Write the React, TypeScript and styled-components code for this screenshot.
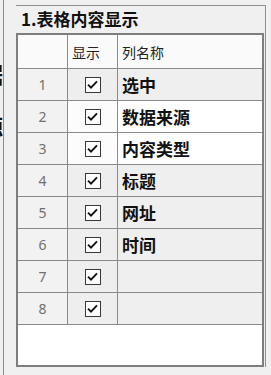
import styled, { createGlobalStyle } from "styled-components";

const GlobalStyle = createGlobalStyle`
  html, body {
    margin: 0;
    padding: 0;
    background: #f0f0f0;
  }
  body {
    font-family: "Noto Sans CJK SC", "Noto Sans", sans-serif;
  }
`;

const rows = [
  { name: "选中", light: false },
  { name: "数据来源", light: true },
  { name: "内容类型", light: true },
  { name: "标题", light: false },
  { name: "网址", light: false },
  { name: "时间", light: false },
  { name: "", light: false },
  { name: "", light: false },
];

const Check = () => (
  <CheckBox>
    <svg width="13" height="13" viewBox="0 0 13 13">
      <path d="M2 6.6 L5 9.6 L11 3.4" fill="none" stroke="#111" strokeWidth="1.9" />
    </svg>
  </CheckBox>
);

export default function App() {
  return (
    <>
      <GlobalStyle />
      <Page>
        <LeftEdge>
          <Clipped>
            <Fragment $top={60}>据</Fragment>
            <Fragment $top={112}>源</Fragment>
          </Clipped>
          <GreenLine />
        </LeftEdge>
        <GroupBox>
          <Title>1.表格内容显示</Title>
          <Table>
            <Grid>
              <HeadCell />
              <HeadCell>显示</HeadCell>
              <HeadCell>列名称</HeadCell>
              {rows.map((r, i) => (
                <Row key={i}>
                  <NumCell>{i + 1}</NumCell>
                  <CheckCell $light={r.light}>
                    <Check />
                  </CheckCell>
                  <NameCell $light={r.light}>{r.name}</NameCell>
                </Row>
              ))}
            </Grid>
            <Filler />
          </Table>
        </GroupBox>
      </Page>
    </>
  );
}

const Page = styled.div`
  display: flex;
  height: 375px;
  width: 271px;
  overflow: hidden;
`;

const LeftEdge = styled.div`
  width: 16px;
  display: flex;
  flex-shrink: 0;
`;

const Clipped = styled.div`
  width: 3px;
  height: 100%;
  overflow: hidden;
  position: relative;
`;

const Fragment = styled.div<{ $top: number }>`
  position: absolute;
  top: ${(p) => p.$top}px;
  right: 0;
  font-size: 22px;
  font-weight: 700;
  color: #111;
  line-height: 26px;
`;

const GreenLine = styled.div`
  width: 1px;
  height: 100%;
  background: #47b083;
`;

const GroupBox = styled.div`
  margin-top: 5px;
  width: 250px;
  height: 362px;
  box-sizing: border-box;
  border: 1px solid #8e8e8e;
  border-left: 0;
  border-bottom: 0;
  display: flex;
  flex-direction: column;
  flex-shrink: 0;
`;

const Title = styled.div`
  height: 27px;
  padding-left: 5px;
  font-size: 17px;
  font-weight: 700;
  line-height: 25px;
  color: #111;
`;

const Table = styled.div`
  flex: 1;
  margin-right: 1px;
  border: 2px solid #7d7d7d;
  background: #ffffff;
  display: flex;
  flex-direction: column;
`;

const Grid = styled.div`
  display: grid;
  grid-template-columns: 49px 49px 1fr;
  grid-auto-rows: 31px;
  grid-template-rows: 33px;
  gap: 1px;
  background: #8a8a8a;
  border-bottom: 1px solid #8a8a8a;
`;

const HeadCell = styled.div`
  background: #fafafa;
  display: flex;
  align-items: center;
  padding-left: 4px;
  font-size: 14px;
  color: #222;
`;

const Row = styled.div`
  display: contents;
`;

const NumCell = styled.div`
  background: #f2f2f2;
  display: flex;
  align-items: center;
  justify-content: center;
  font-family: "Noto Sans", "Liberation Sans", sans-serif;
  font-size: 14px;
  color: #707070;
`;

const CheckCell = styled.div<{ $light: boolean }>`
  background: ${(p) => (p.$light ? "#fcfcfc" : "#eeeeee")};
  display: flex;
  align-items: center;
  justify-content: center;
`;

const NameCell = styled.div<{ $light: boolean }>`
  background: ${(p) => (p.$light ? "#ffffff" : "#efefef")};
  display: flex;
  align-items: center;
  padding-left: 4px;
  font-size: 17px;
  font-weight: 700;
  color: #111;
`;

const CheckBox = styled.div`
  width: 16px;
  height: 16px;
  box-sizing: border-box;
  border: 1px solid #3a3a3a;
  background: #ffffff;
  display: flex;
  align-items: center;
  justify-content: center;
`;

const Filler = styled.div`
  flex: 1;
  background: #ffffff;
`;
